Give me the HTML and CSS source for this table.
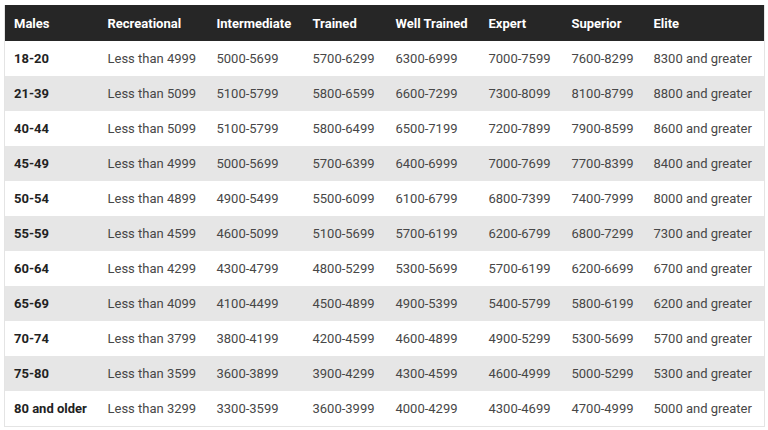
FILE: index.html
```html
<!DOCTYPE html>
<html lang="en">
<head>
<meta charset="utf-8">
<title>Males</title>
<link rel="stylesheet" href="styles.css">
</head>
<body>
<table class="grid">
  <colgroup>
    <col class="c1"><col class="c2"><col class="c3"><col class="c4"><col class="c5"><col class="c6"><col class="c7"><col class="c8">
  </colgroup>
  <thead>
    <tr><th>Males</th><th>Recreational</th><th>Intermediate</th><th>Trained</th><th>Well Trained</th><th>Expert</th><th>Superior</th><th>Elite</th></tr>
  </thead>
  <tbody>
    <tr><th>18-20</th><td>Less than 4999</td><td>5000-5699</td><td>5700-6299</td><td>6300-6999</td><td>7000-7599</td><td>7600-8299</td><td>8300 and greater</td></tr>
    <tr><th>21-39</th><td>Less than 5099</td><td>5100-5799</td><td>5800-6599</td><td>6600-7299</td><td>7300-8099</td><td>8100-8799</td><td>8800 and greater</td></tr>
    <tr><th>40-44</th><td>Less than 5099</td><td>5100-5799</td><td>5800-6499</td><td>6500-7199</td><td>7200-7899</td><td>7900-8599</td><td>8600 and greater</td></tr>
    <tr><th>45-49</th><td>Less than 4999</td><td>5000-5699</td><td>5700-6399</td><td>6400-6999</td><td>7000-7699</td><td>7700-8399</td><td>8400 and greater</td></tr>
    <tr><th>50-54</th><td>Less than 4899</td><td>4900-5499</td><td>5500-6099</td><td>6100-6799</td><td>6800-7399</td><td>7400-7999</td><td>8000 and greater</td></tr>
    <tr><th>55-59</th><td>Less than 4599</td><td>4600-5099</td><td>5100-5699</td><td>5700-6199</td><td>6200-6799</td><td>6800-7299</td><td>7300 and greater</td></tr>
    <tr><th>60-64</th><td>Less than 4299</td><td>4300-4799</td><td>4800-5299</td><td>5300-5699</td><td>5700-6199</td><td>6200-6699</td><td>6700 and greater</td></tr>
    <tr><th>65-69</th><td>Less than 4099</td><td>4100-4499</td><td>4500-4899</td><td>4900-5399</td><td>5400-5799</td><td>5800-6199</td><td>6200 and greater</td></tr>
    <tr><th>70-74</th><td>Less than 3799</td><td>3800-4199</td><td>4200-4599</td><td>4600-4899</td><td>4900-5299</td><td>5300-5699</td><td>5700 and greater</td></tr>
    <tr><th>75-80</th><td>Less than 3599</td><td>3600-3899</td><td>3900-4299</td><td>4300-4599</td><td>4600-4999</td><td>5000-5299</td><td>5300 and greater</td></tr>
    <tr><th>80 and older</th><td>Less than 3299</td><td>3300-3599</td><td>3600-3999</td><td>4000-4299</td><td>4300-4699</td><td>4700-4999</td><td>5000 and greater</td></tr>
  </tbody>
</table>
</body>
</html>
```
FILE: styles.css
```css
html, body {
  margin: 0;
  padding: 0;
  background: #ffffff;
}
body {
  padding: 5px 4px 0 4px;
  font-family: Roboto, "Liberation Sans", Arial, sans-serif;
  font-size: 13px;
}
.grid {
  width: 760px;
  border-collapse: collapse;
  table-layout: fixed;
  border: 1px solid #e4e4e4;
  border-top: 0;
}
.c1 { width: 94px; }
.c2 { width: 109px; }
.c3 { width: 96px; }
.c4 { width: 83px; }
.c5 { width: 93px; }
.c6 { width: 83px; }
.c7 { width: 82px; }
.c8 { width: 120px; }
.grid thead th {
  background: #262626;
  color: #ffffff;
  font-weight: 700;
  text-align: left;
  height: 36px;
  padding: 0 0 0 9px;
  border: 0;
}
.grid tbody th,
.grid tbody td {
  height: 35px;
  padding: 0 0 0 9px;
  text-align: left;
  white-space: nowrap;
  border: 0;
}
.grid tbody th {
  color: #222222;
  font-weight: 700;
}
.grid tbody td {
  color: #474747;
  font-weight: 400;
}
.grid tbody tr:nth-child(even) {
  background: #e6e6e6;
}
```
